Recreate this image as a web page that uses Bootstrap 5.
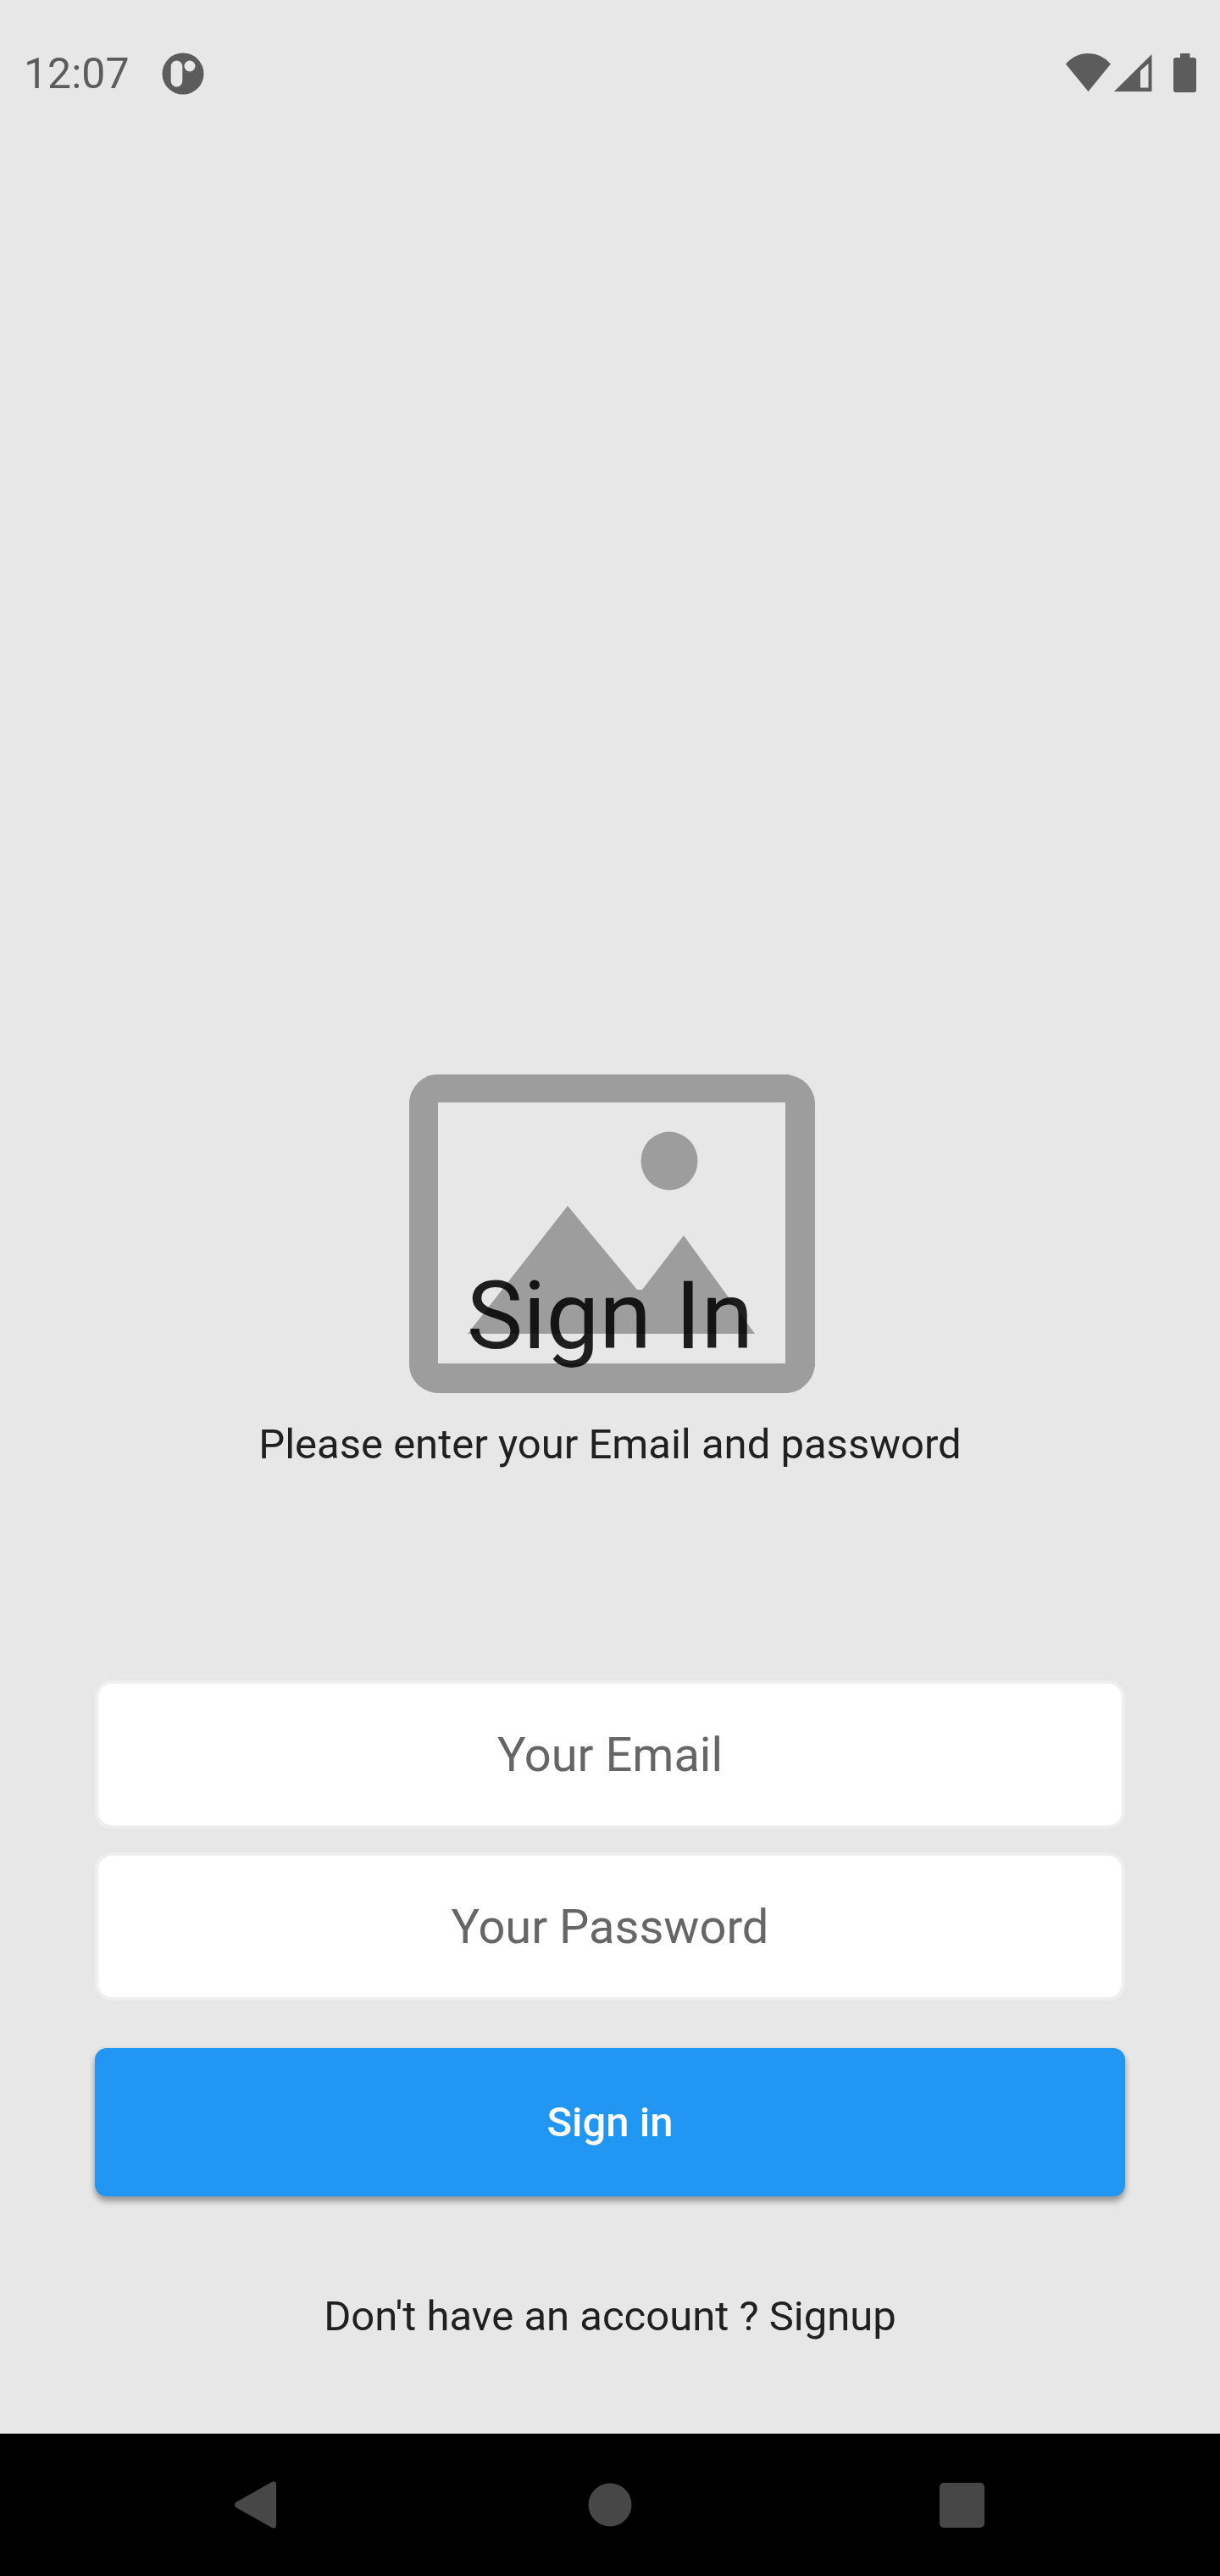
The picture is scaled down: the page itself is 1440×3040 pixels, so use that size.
<!DOCTYPE html>
<html lang="en">
<head>
<meta charset="utf-8">
<meta name="viewport" content="width=device-width, initial-scale=1">
<title>Sign In</title>
<link href="https://cdn.jsdelivr.net/npm/bootstrap@5.3.0/dist/css/bootstrap.min.css" rel="stylesheet">
<style>
  body { background: #e7e7e7; color: #202020; font-family: Roboto, sans-serif; font-size: 49px; line-height: 58px; }
  .status-bar { color: #5c5c5c; padding: 57px 28px 0; }
  .status-bar time { font-size: 50px; line-height: 60px; }
  .status-bar svg, .system-nav svg { display: block; fill: currentColor; }
  .app-icon { margin-left: 38px; }
  .screen { padding: 0 112px 109px; }
  .hero { display: grid; justify-items: center; margin-bottom: 32px; }
  .hero > * { grid-area: 1 / 1; }
  .hero-title { align-self: end; font-size: 112px; line-height: 132px; font-weight: 400; color: rgba(0, 0, 0, .87); margin: 0 0 25px; }
  .intro { margin-bottom: 249px; }
  .field { height: 175px; border: 4px solid #eee; border-radius: 20px; background: #fff; font-size: 56px; line-height: 66px; padding: 0 40px; }
  .field::placeholder { color: #666; opacity: 1; }
  .fields { gap: 28px; margin-bottom: 56px; }
  .submit { --bs-btn-bg: #2196f3; --bs-btn-border-color: #2196f3; --bs-btn-hover-bg: #1e88e5; height: 175px; border: 0; border-radius: 14px; font-size: 49px; font-weight: 500; line-height: 58px; box-shadow: 0 7px 7px rgba(0, 0, 0, .2), 0 3px 7px rgba(0, 0, 0, .22); margin-bottom: 113px; }
  .system-nav { background: #000; height: 168px; padding: 0 94px; }
  .system-nav .btn { color: #474747; border: 0; }
</style>
<script src="https://cdn.jsdelivr.net/npm/bootstrap@5.3.0/dist/js/bootstrap.bundle.min.js"></script>
</head>
<body class="d-flex flex-column min-vh-100">
  <header class="status-bar d-flex align-items-center justify-content-between">
    <div class="d-flex align-items-center">
      <time>12:07</time>
      <svg class="app-icon" width="50" height="50" viewBox="0 0 50 50" aria-hidden="true">
        <path fill-rule="evenodd" d="M25 .5a24.5 24.5 0 1 0 0 49a24.5 24.5 0 1 0 0-49zM17.500 9.500a6.800 6.800 0 0 1 6.800 6.800v17.400a6.800 6.800 0 0 1-13.600 0V16.300a6.800 6.800 0 0 1 6.800-6.800zM33 9.500a6.500 6.500 0 1 1 0 13a6.500 6.500 0 1 1 0-13z"/>
      </svg>
    </div>
    <svg width="154" height="48" viewBox="0 0 154 48" aria-hidden="true">
      <path d="M0 12.500Q11 0 26.500 0T53 12.500L26.500 45z"/>
      <path fill-rule="evenodd" d="M57 45L101.500 1V45zM88 20.500V40.500H97.500V12z"/>
      <path d="M135 0h11.500v5H151q3 0 3 3v35q0 3-3 3h-21q-3 0-3-3V8q0-3 3-3h5z"/>
    </svg>
  </header>

  <main class="screen mt-auto text-center">
    <div class="hero">
      <svg width="484" height="376" viewBox="-4 0 484 376" fill="#9d9d9d" role="img" aria-label="Placeholder picture">
        <path fill-rule="evenodd" d="M32 0H448Q464 3 472 13Q479 22 480 32V344Q478 358 468 367Q460 375 448 376H32Q20 374 11 366Q2 357 1 344V32Q2 20 11 10Q20 1 32 0zM35 33V341H445V33z"/>
        <ellipse cx="308" cy="102" rx="33.500" ry="34.500"/>
        <path d="M70 306L188 155L270 254H276L325 190L409 306z"/>
      </svg>
      <h1 class="hero-title">Sign In</h1>
    </div>
    <p class="intro">Please enter your Email and password</p>
    <form>
      <div class="fields d-flex flex-column">
        <input class="field form-control text-center" type="email" id="email" placeholder="Your Email" aria-label="Your Email">
        <input class="field form-control text-center" type="password" id="password" placeholder="Your Password" aria-label="Your Password">
      </div>
      <button class="submit btn btn-primary w-100" type="submit">Sign in</button>
    </form>
    <p class="mb-0">Don't have an account ? <a class="text-reset text-decoration-none" href="#signup">Signup</a></p>
  </main>

  <nav class="system-nav d-flex align-items-center" aria-label="System">
    <div class="row g-0 flex-fill">
      <div class="col d-flex justify-content-center align-items-center"><button class="btn p-0" type="button" aria-label="Back">
        <svg width="52" height="56" viewBox="0 0 52 56"><path d="M1.500 25L44 1Q49-1 49 4V52Q49 57 44 55L1.500 31Q-1.500 28 1.500 25z"/></svg>
      </button></div>
      <div class="col d-flex justify-content-center align-items-center"><button class="btn p-0" type="button" aria-label="Home">
        <svg width="52" height="52" viewBox="0 0 52 52"><circle cx="26" cy="26" r="25.500"/></svg>
      </button></div>
      <div class="col d-flex justify-content-center align-items-center"><button class="btn p-0" type="button" aria-label="Recent apps">
        <svg width="56" height="53" viewBox="0 0 56 53"><rect width="53" height="53" rx="5"/></svg>
      </button></div>
    </div>
  </nav>
</body>
</html>
